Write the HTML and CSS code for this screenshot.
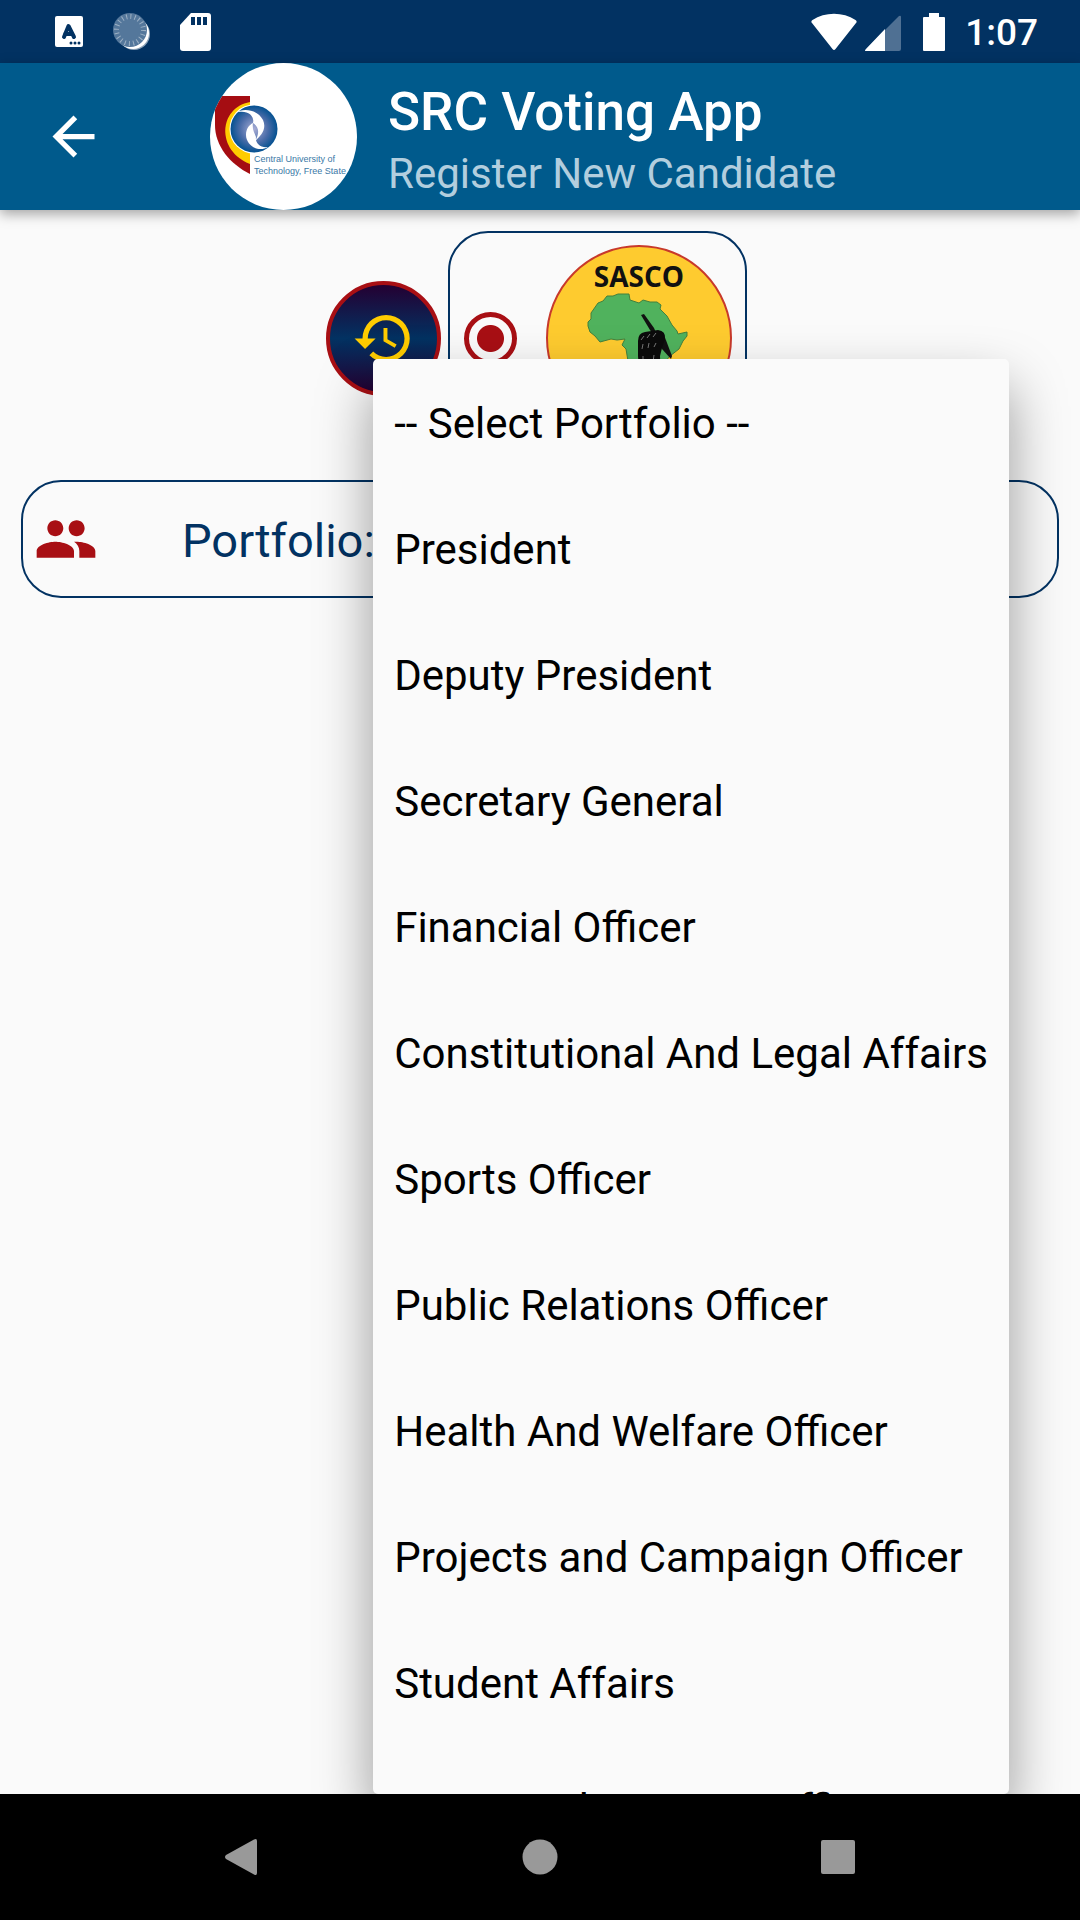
FILE: index.html
```html
<!DOCTYPE html>
<html lang="en">
<head>
<meta charset="utf-8">
<meta name="viewport" content="width=device-width, initial-scale=1">
<title>SRC Voting App</title>
<link rel="stylesheet" href="styles.css">
</head>
<body>
<div class="status-bar">
  <div class="status-group status-left">
    <svg width="30" height="38" viewBox="0 0 30 38" aria-hidden="true">
      <rect x="1" y="3" width="28" height="31" rx="2" fill="#fff"/>
      <path d="M10 24 14.500 13 20 24M11 21h7" fill="none" stroke="#023262" stroke-width="4" stroke-linecap="round" stroke-linejoin="round"/>
      <g fill="#023262"><circle cx="17" cy="30" r="1.500"/><circle cx="21" cy="30" r="1.500"/><circle cx="25" cy="30" r="1.500"/></g>
    </svg>
    <svg width="38" height="38" viewBox="0 0 38 38" aria-hidden="true">
      <circle cx="21" cy="21" r="16" fill="#8ba2b8"/>
      <circle cx="20" cy="20" r="16" fill="#fff"/>
      <circle cx="17" cy="17" r="17" fill="#54779b"/>
      <circle cx="17" cy="17" r="13.500" fill="none" stroke="#9db1c5" stroke-width="5" stroke-dasharray="1 3.240"/>
    </svg>
    <svg width="31" height="38" viewBox="0 0 31 38" aria-hidden="true">
      <path d="M11 0h17q3 0 3 3v32q0 3-3 3H3q-3 0-3-3V12z" fill="#fff"/>
      <path d="M11 4h4v8h-4zM17 4h4v8h-4zM23 4h4v8h-4z" fill="#023262"/>
    </svg>
  </div>
  <div class="status-group">
    <svg width="46" height="38" viewBox="0 0 46 38" aria-hidden="true">
      <path d="M1 10Q-.5 8.500 1.500 7C14-1.500 32-1.500 44.500 7Q46.500 8.500 45 10L24.500 36Q23 38 21.500 36z" fill="#fff"/>
    </svg>
    <svg width="36" height="38" viewBox="0 0 36 38" aria-hidden="true">
      <path d="M34 3q2-1 2 1v32q0 2-2 2H1q-2 0 0-2z" fill="#4f7093"/>
      <path d="M20 16v22H1q-2 0 0-2z" fill="#fff"/>
    </svg>
    <svg class="battery" width="22" height="38" viewBox="0 0 22 38" aria-hidden="true">
      <path d="M6 0h10v4h5q1 0 1 1v32q0 1-1 1H1q-1 0-1-1V5q0-1 1-1h5z" fill="#fff"/>
    </svg>
    <time class="clock">1:07</time>
  </div>
</div>

<header class="toolbar">
  <button class="icon-button" type="button" aria-label="Back">
    <svg width="63" height="63" viewBox="0 0 24 24" fill="#fff"><path d="M20 11H7.830l5.590-5.590L12 4l-8 8 8 8 1.410-1.410L7.830 13H20v-2z"/></svg>
  </button>
  <svg class="brand" viewBox="0 0 147 147" role="img" aria-label="Central University of Technology, Free State">
    <defs>
      <clipPath id="disc"><circle cx="73.500" cy="73.500" r="73.500"/></clipPath>
      <radialGradient id="globe" cx=".5" cy=".5" r=".5">
        <stop offset="0" stop-color="#a9aed6"/><stop offset=".6" stop-color="#4a6ca8"/><stop offset="1" stop-color="#035191"/>
      </radialGradient>
    </defs>
    <circle cx="73.500" cy="73.500" r="73.500" fill="#fff"/>
    <g clip-path="url(#disc)">
      <path d="M5 33h35v78C20 101 5 83 5 62z" fill="#a50d12"/>
      <path d="M40 39C8 45 6 88 40 101z" fill="#fc0"/>
      <circle cx="44" cy="66" r="24.500" fill="#fff"/>
      <circle cx="44" cy="66" r="23.500" fill="url(#globe)"/>
      <path d="M25 50C34 44 48 47 53 57C57 66 51 73 45 78C49 72 50 64 43 60C45 52 36 46 25 50z" fill="#fff"/>
      <path d="M58 84C48 90 36 82 36 72C36 66 39 62 43 60C42 66 44 69 46 74C45 80 50 85 58 84z" fill="#fff"/>
      <text class="brand-text" x="44" y="99">Central University of</text>
      <text class="brand-text" x="44" y="111">Technology, Free State</text>
    </g>
  </svg>
  <div class="titles">
    <h1 class="title">SRC Voting App</h1>
    <p class="subtitle">Register New Candidate</p>
  </div>
</header>

<main class="content">
  <div class="party-row">
    <button class="history" type="button" aria-label="History">
      <svg width="63" height="63" viewBox="0 0 24 24" fill="#fc0"><path d="M13 3a9 9 0 0 0-9 9H1l3.890 3.890.07.14L9 12H6c0-3.870 3.130-7 7-7s7 3.130 7 7-3.130 7-7 7c-1.930 0-3.680-.79-4.940-2.060l-1.420 1.420A8.954 8.954 0 0 0 13 21a9 9 0 0 0 0-18zm-1 5v5l4.280 2.540.72-1.210-3.500-2.080V8H12z"/></svg>
    </button>
    <label class="party">
      <input class="party-radio" type="radio" name="party" value="sasco" aria-label="SASCO" checked>
      <svg class="party-logo" viewBox="0 0 186 186" aria-hidden="true">
        <circle cx="93" cy="93" r="92" fill="#fecb2f" stroke="#c8392b" stroke-width="2"/>
        <text class="party-text" x="93" y="42">SASCO</text>
        <path d="M42 81L42 77L45 74L45 68L52 58L57 56L61 51L67 51L72 49L83 49L84 55L93 58L97 55L104 57L111 57L115 60L114 64L121 71L126 80L131 86L132 89L141 87L141 91L137 96L133 104L124 111L118 118L119 130L111 138L106 152L96 160L90 158L86 144L85 128L82 116L80 104L76 100L79 94L71 95L65 94L54 97L49 91L44 87Z" fill="#50b25d" stroke="#43803d" stroke-width="1"/>
        <path d="M95 70l3-1 10 14 3 7-3 1-4-6z" fill="#111"/>
        <path d="M112 92l6-2 8 21-1 3-9-10z" fill="#111"/>
        <path d="M92 96q0-8 7-9l13-2q8 1 7 9l-3 9-2 8 1 26H94l-2-26z" fill="#0b0b0b"/>
        <path d="M95 95l3-4M101 93l3-4M107 92l3-4M96 104l1-5M102 103l1-5M108 102l2-4M97 111v6M108 110l-1 7" stroke="#777" stroke-width="1" fill="none"/>
      </svg>
    </label>
  </div>
  <div class="field">
    <svg class="field-icon" width="64" height="64" viewBox="0 0 24 24" fill="#a80f14" aria-hidden="true"><path d="M16 11c1.660 0 2.990-1.340 2.990-3S17.660 5 16 5s-3 1.340-3 3 1.340 3 3 3zm-8 0c1.660 0 2.990-1.340 2.990-3S9.660 5 8 5 5 6.340 5 8s1.340 3 3 3zm0 2c-2.330 0-7 1.170-7 3.500V19h14v-2.500c0-2.330-4.670-3.500-7-3.500zm8 0c-.29 0-.62.020-.97.050 1.160.84 1.970 1.970 1.970 3.450V19h6v-2.500c0-2.330-4.670-3.500-7-3.500z"/></svg>
    <label class="field-label" for="portfolio">Portfolio:</label>
    <select class="field-select" id="portfolio">
      <option>-- Select Portfolio --</option>
    </select>
  </div>

  <ul class="menu" role="listbox" aria-label="Portfolio">
    <li><button class="menu-item" type="button" role="option">-- Select Portfolio --</button></li>
    <li><button class="menu-item" type="button" role="option">President</button></li>
    <li><button class="menu-item" type="button" role="option">Deputy President</button></li>
    <li><button class="menu-item" type="button" role="option">Secretary General</button></li>
    <li><button class="menu-item" type="button" role="option">Financial Officer</button></li>
    <li><button class="menu-item" type="button" role="option">Constitutional And Legal Affairs</button></li>
    <li><button class="menu-item" type="button" role="option">Sports Officer</button></li>
    <li><button class="menu-item" type="button" role="option">Public Relations Officer</button></li>
    <li><button class="menu-item" type="button" role="option">Health And Welfare Officer</button></li>
    <li><button class="menu-item" type="button" role="option">Projects and Campaign Officer</button></li>
    <li><button class="menu-item" type="button" role="option">Student Affairs</button></li>
    <li><button class="menu-item" type="button" role="option">Equity and Diversity Officer</button></li>
  </ul>
</main>

<nav class="nav-bar" aria-label="System">
  <button class="nav-button" type="button" aria-label="Back">
    <svg width="36" height="36" viewBox="0 0 36 36" fill="#999"><path d="M30 .5q3-1.500 3 1.500v32q0 3-3 1.500L2 20q-2-2 0-4z"/></svg>
  </button>
  <button class="nav-button" type="button" aria-label="Home">
    <svg width="36" height="36" viewBox="0 0 36 36" fill="#999"><circle cx="18" cy="18" r="17.500"/></svg>
  </button>
  <button class="nav-button" type="button" aria-label="Recent apps">
    <svg width="36" height="36" viewBox="0 0 36 36" fill="#999"><rect x="1" y="1" width="34" height="34" rx="2"/></svg>
  </button>
</nav>
</body>
</html>
```
FILE: styles.css
```css
* { box-sizing: border-box; }

body {
  margin: 0;
  height: 100vh;
  display: flex;
  flex-direction: column;
  overflow: hidden;
  background: #fafafa;
  color: #000;
  font-family: Roboto, sans-serif;
}

button {
  margin: 0;
  padding: 0;
  border: 0;
  background: none;
  color: inherit;
  font: inherit;
}

svg { display: block; flex: none; }

/* Status bar */
.status-bar {
  flex: none;
  height: 63px;
  padding: 0 42px 0 54px;
  display: flex;
  align-items: center;
  justify-content: space-between;
  background: #023262;
}
.status-group { display: flex; align-items: center; gap: 8px; }
.status-left { gap: 29px; }
.battery { margin: 0 12px 0 14px; }
.clock {
  padding-top: 2px;
  color: #fff;
  font-size: 37px;
  line-height: 44px;
  font-weight: 500;
}

/* Toolbar */
.toolbar {
  flex: none;
  position: relative;
  z-index: 1;
  height: 147px;
  padding-left: 42px;
  display: flex;
  align-items: center;
  background: #005a8c;
  box-shadow: 0 4px 12px rgba(0, 0, 0, .35);
}
.icon-button { margin-right: 105px; }
.brand { width: 147px; height: 147px; }
.brand-text {
  fill: #3a78a6;
  font-family: "Liberation Sans", sans-serif;
  font-size: 9px;
}
.titles { margin-left: 31px; padding-top: 10px; }
.title {
  margin: 0;
  color: #fff;
  font-size: 53px;
  line-height: 64px;
  font-weight: 500;
}
.subtitle {
  margin: 0;
  color: #b2cede;
  font-size: 42px;
  line-height: 60px;
}

/* Content */
.content {
  flex: 1;
  min-height: 0;
  position: relative;
  padding: 21px;
  display: flex;
  flex-direction: column;
  gap: 35px;
}
.party-row {
  display: flex;
  align-items: center;
  justify-content: center;
  gap: 7px;
  padding-right: 7px;
}
.history {
  width: 115px;
  height: 115px;
  display: flex;
  align-items: center;
  justify-content: center;
  border: 4px solid #a80f14;
  border-radius: 50%;
  background: linear-gradient(#240032, #023262 50%, #240032);
}
.party {
  display: flex;
  align-items: center;
  gap: 29px;
  padding: 12px 13px 12px 14px;
  border: 2px solid #023262;
  border-radius: 40px;
}
.party-radio {
  appearance: none;
  width: 53px;
  height: 53px;
  margin: 0;
  border: 5px solid #a80f14;
  border-radius: 50%;
  background: radial-gradient(circle, #a80f14 13px, transparent 14px);
}
.party-logo { width: 186px; height: 186px; }
.party-text {
  fill: #111;
  font-family: "Open Sans", sans-serif;
  font-size: 28px;
  font-weight: 700;
  text-anchor: middle;
}
.field {
  height: 118px;
  padding: 0 11px;
  display: flex;
  align-items: center;
  border: 2px solid #023262;
  border-radius: 40px;
}
.field-label {
  margin-left: 84px;
  padding-top: 4px;
  color: #023262;
  font-size: 47px;
  line-height: 56px;
}
.field-select {
  width: 600px;
  margin-left: 16px;
  appearance: none;
  border: 0;
  background: none;
  font-family: inherit;
  font-size: 42px;
}

/* Portfolio menu */
.menu {
  position: absolute;
  top: 149px;
  right: 71px;
  bottom: 0;
  margin: 0;
  padding: 2px 0 0;
  overflow: hidden;
  list-style: none;
  border-radius: 5px;
  background: #fafafa;
  box-shadow: 0 28px 56px rgba(0, 0, 0, .4);
}
.menu-item {
  display: block;
  width: 100%;
  height: 126px;
  padding: 0 21px;
  font-size: 42px;
  line-height: 48px;
  text-align: left;
  white-space: nowrap;
}

/* System navigation */
.nav-bar {
  flex: none;
  position: relative;
  z-index: 1;
  height: 126px;
  display: flex;
  align-items: center;
  justify-content: center;
  gap: 202px;
  background: #000;
}
.nav-button {
  width: 96px;
  height: 96px;
  display: flex;
  align-items: center;
  justify-content: center;
}
```
